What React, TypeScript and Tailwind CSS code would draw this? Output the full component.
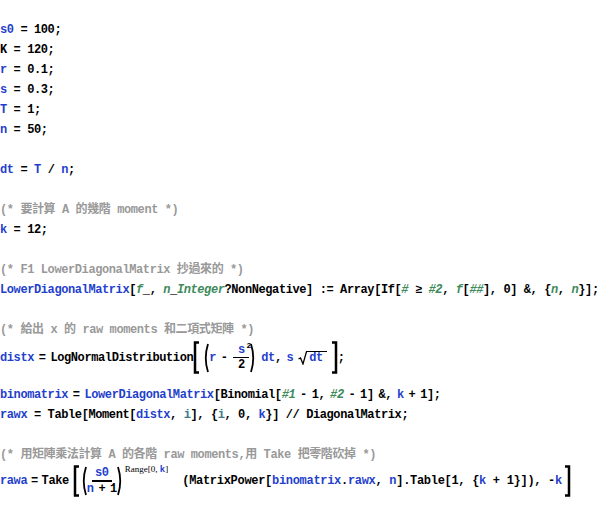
import React from "react";

const B = ({ children }: { children: React.ReactNode }) => (
  <span className="text-[#1f3fcc]">{children}</span>
);
const G = ({ children }: { children: React.ReactNode }) => (
  <span className="text-[#3e8a5b] italic">{children}</span>
);
const T = ({ children }: { children: React.ReactNode }) => (
  <span className="text-[#3b7b8c]">{children}</span>
);
const C = ({ children }: { children: React.ReactNode }) => (
  <div className="h-[20px] flex items-center whitespace-pre text-[#999999]">{children}</div>
);
const L = ({ children }: { children: React.ReactNode }) => (
  <div className="h-[20px] flex items-center whitespace-pre">{children}</div>
);
const Blank = () => <div className="h-[20px]" />;

const LBr = ({ h }: { h: number }) => (
  <svg width="7" height={h} className="shrink-0">
    <path d={`M6 1.5 H2 V${h - 1.5} H6`} stroke="black" strokeWidth="2.5" fill="none" />
  </svg>
);
const RBr = ({ h }: { h: number }) => (
  <svg width="7" height={h} className="shrink-0">
    <path d={`M1 1.5 H5 V${h - 1.5} H1`} stroke="black" strokeWidth="2.5" fill="none" />
  </svg>
);
const LPar = ({ h }: { h: number }) => (
  <svg width="6" height={h} className="shrink-0">
    <path d={`M5 1 Q0.5 ${h / 2} 5 ${h - 1}`} stroke="black" strokeWidth="1.8" fill="none" />
  </svg>
);
const RPar = ({ h }: { h: number }) => (
  <svg width="6" height={h} className="shrink-0">
    <path d={`M1 1 Q5.5 ${h / 2} 1 ${h - 1}`} stroke="black" strokeWidth="1.8" fill="none" />
  </svg>
);

const LB = "{";
const RB = "}";

export default function App() {
  return (
    <div className="w-[598px] h-[521px] bg-white overflow-hidden pt-[20px] font-bold text-[12px] tracking-[-0.4px] leading-[20px] text-black font-['Liberation_Mono','Noto_Sans_CJK_TC',monospace]">
      <L>
        <B>s0</B> = 100;
      </L>
      <L>K = 120;</L>
      <L>
        <B>r</B> = 0.1;
      </L>
      <L>
        <B>s</B> = 0.3;
      </L>
      <L>
        <B>T</B> = 1;
      </L>
      <L>
        <B>n</B> = 50;
      </L>
      <Blank />
      <L>
        <B>dt</B> = <B>T</B> / <B>n</B>;
      </L>
      <Blank />
      <C>(* 要計算 A 的幾階 moment *)</C>
      <L>
        <B>k</B> = 12;
      </L>
      <Blank />
      <C>(* F1 LowerDiagonalMatrix 抄過來的 *)</C>
      <L>
        <B>LowerDiagonalMatrix</B>[<G>f</G>_, <G>n</G>_<G>Integer</G>?NonNegative] := Array[If[<G>#</G> ≥ <G>#2</G>, <G>f</G>[<G>##</G>], 0] &amp;, {LB}<G>n</G>, <G>n</G>{RB}];
      </L>
      <Blank />
      <C>(* 給出 x 的 raw moments 和二項式矩陣 *)</C>
      {/* distx line */}
      <div className="h-[45px]">
        <div className="h-[35px] flex items-center whitespace-pre [word-spacing:-2px]">
          <B>distx</B> = LogNormalDistribution
          <LBr h={33} />
          <span className="w-[3px]" />
          <LPar h={30} />
          <B>r</B>
          <span> - </span>
          <span className="inline-flex flex-col items-center leading-[12px] mx-[1px]">
            <span className="text-[#1f3fcc] relative">
              s<span className="absolute -top-[4px] -right-[6px] text-[8px] text-black">2</span>
            </span>
            <span className="block w-[16px] h-[1.5px] bg-black my-[1px]" />
            <span>2</span>
          </span>
          <RPar h={30} />
          <span> </span>
          <B>dt</B>
          <span>, </span>
          <B>s</B>
          <span> </span>
          <span className="inline-flex items-stretch h-[14px]">
            <svg width="9" height="14" className="shrink-0">
              <path d="M0.5 8 L2.5 7 L5 13 L8.5 0.75 L9 0.75" stroke="black" strokeWidth="1.3" fill="none" />
            </svg>
            <span className="border-t-[1.5px] border-black px-[2px] pr-[4px] leading-[12px] flex items-center">
              <B>dt</B>
            </span>
          </span>
          <span className="w-[4px]" />
          <RBr h={33} />
          <span>;</span>
        </div>
      </div>
      <div className="h-[20px] flex items-center whitespace-pre [word-spacing:-2px]">
        <B>binomatrix</B> = <B>LowerDiagonalMatrix</B>[Binomial[<G>#1</G> - 1, <G>#2</G> - 1] &amp;, <B>k</B> + 1];
      </div>
      <L>
        <B>rawx</B> = Table[Moment[<B>distx</B>, <T>i</T>], {LB}<T>i</T>, 0, <B>k</B>{RB}] // DiagonalMatrix;
      </L>
      <Blank />
      <C>(* 用矩陣乘法計算 A 的各階 raw moments,用 Take 把零階砍掉 *)</C>
      {/* rawa line */}
      <div className="h-[34px] mt-[-1px] flex items-center whitespace-pre">
        <span className="[word-spacing:-3px]">
          <B>rawa</B> = Take
        </span>
        <span className="w-[4px]" />
        <LBr h={32} />
        <span className="w-[1px]" />
        <LPar h={30} />
        <span className="inline-flex flex-col items-center leading-[12px] [word-spacing:-2px]">
          <B>s0</B>
          <span className="block w-[20px] h-[1.5px] bg-black my-[1px]" />
          <span>
            <B>n</B> + 1
          </span>
        </span>
        <RPar h={30} />
        <span className="self-start mt-[0px] ml-[2px] text-[9px] tracking-normal leading-[10px] font-normal font-['Liberation_Serif',serif]">
          Range[0, <span className="text-[#1f3fcc] font-bold font-['Liberation_Mono',monospace]">k</span>]
        </span>
        <span className="w-[14px]" />
        <span className="tracking-[-0.3px]">
          (MatrixPower[<B>binomatrix</B>.<B>rawx</B>, <B>n</B>].Table[1, {LB}<B>k</B> + 1{RB}]), -<B>k</B>
        </span>
        <span className="w-[2px]" />
        <RBr h={32} />
      </div>
    </div>
  );
}
